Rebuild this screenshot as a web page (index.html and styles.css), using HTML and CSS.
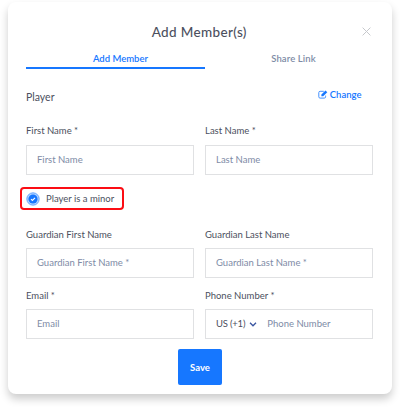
FILE: index.html
```html
<!DOCTYPE html>
<html lang="en">
<head>
<meta charset="utf-8">
<title>Add Member(s)</title>
<link rel="stylesheet" href="styles.css">
</head>
<body>
<main class="card">
  <header class="head">
    <h1 class="title">Add Member(s)</h1>
    <svg class="close" viewBox="0 0 9 9"><path d="M.6.6l7.8 7.8M8.4.6L.6 8.4"/></svg>
  </header>
  <nav class="tabs">
    <div class="tab active">Add Member</div>
    <div class="tab share">Share Link</div>
  </nav>
  <div class="section">
    <span class="player">Player</span>
    <span class="change">
      <svg class="edit" viewBox="0 0 10 9"><path class="line" d="M5.8 1.3H2.1Q.8 1.3.8 2.6v4.2q0 1.3 1.3 1.3h4.2q1.3 0 1.3-1.3V5.6"/><path class="fill" d="M3.4 4.5L7.5.4l1.8 1.8-4.1 4.1H3.4z"/></svg>
      <span>Change</span>
    </span>
  </div>
  <div class="row">
    <div class="field"><label>First Name *</label><div class="input">First Name</div></div>
    <div class="field"><label>Last Name *</label><div class="input">Last Name</div></div>
  </div>
  <div class="minor">
    <svg class="check" viewBox="0 0 14 14"><circle class="halo" cx="7" cy="7" r="6.2"/><circle class="disc" cx="7" cy="7" r="4.6"/><path d="M5 7.1l1.4 1.4L9 5.8"/></svg>
    <span>Player is a minor</span>
  </div>
  <div class="row guardian">
    <div class="field"><label>Guardian First Name</label><div class="input">Guardian First Name *</div></div>
    <div class="field"><label>Guardian Last Name</label><div class="input">Guardian Last Name *</div></div>
  </div>
  <div class="row contact">
    <div class="field"><label>Email *</label><div class="input">Email</div></div>
    <div class="field"><label>Phone Number *</label><div class="input"><span class="code">US (+1)</span><svg class="chev" viewBox="0 0 8 5"><path d="M1 .8l3 3 3-3"/></svg><span>Phone Number</span></div></div>
  </div>
  <button class="save">Save</button>
</main>
</body>
</html>
```
FILE: styles.css
```css
* { box-sizing: border-box; }
body {
  margin: 0;
  height: 409px;
  padding: 2px 8.5px 0 8px;
  background: #fff;
  overflow: hidden;
  font-family: Lato, "Noto Sans", sans-serif;
  font-size: 9.5px;
  line-height: 12px;
  color: #4c505e;
  white-space: nowrap;
}
.card {
  height: 392px;
  padding: 0 18px;
  border-radius: 8px;
  background: #fff;
  box-shadow: 0 5px 8px rgba(0, 0, 0, .2);
  display: flex;
  flex-direction: column;
}
.head {
  height: 50px;
  padding: 21px 3px 0 0;
  display: grid;
  grid-template-columns: 9px 1fr 9px;
}
.title {
  grid-column: 2;
  margin: 0;
  padding-left: 2px;
  text-align: center;
  font-size: 13.5px;
  line-height: 18px;
  font-weight: 500;
  letter-spacing: .35px;
}
.close { width: 9px; height: 9px; margin-top: 4px; }
.close path { stroke: #c6c8cc; stroke-width: 1; }
svg { display: block; fill: none; flex: none; }
.tabs { display: flex; height: 17px; width: 358px; }
.tab {
  width: 179px;
  padding: 1px 0 0 10px;
  text-align: center;
  border-bottom: 2px solid transparent;
  color: #7e8ba6;
  font-weight: 600;
}
.share { padding: 1px 2px 0 0; letter-spacing: .1px; }
.active { border-color: #1677ff; color: #1677ff; }
.section {
  display: flex;
  justify-content: space-between;
  padding: 18px 12px 0 0;
  height: 55px;
}
.player { font-size: 10.5px; padding-top: 4px; line-height: 13px; }
.change { display: flex; gap: 2px; color: #1677ff; font-weight: 600; padding-top: 2px; height: 14px; }
.edit { width: 10px; height: 9px; margin-top: 1px; }
.edit .line { stroke: #4391ff; stroke-width: 1; }
.edit .fill { fill: #1677ff; }
.row { display: flex; gap: 11px; height: 51px; }
.field { width: 168px; }
label { display: block; height: 20.5px; padding-top: 1px; }
.input {
  display: flex;
  align-items: center;
  height: 30px;
  border: 1px solid #e0e1e3;
  padding: 1px 10px 0;
  color: #7e8ba6;
}
.minor {
  width: 104px;
  height: 23px;
  margin: 12px 0 0 -6px;
  border: 2px solid #fb0d14;
  border-radius: 4px;
  display: flex;
  align-items: center;
  gap: 6px;
  padding-left: 4px;
}
.minor span { padding-top: 1px; }
.check { width: 14px; height: 14px; }
.halo { fill: #b4d5ff; stroke: #3b8cff; stroke-width: .7; }
.disc { fill: #1677ff; }
.check path { stroke: #fff; stroke-width: 1.1; }
.guardian { margin-top: 17px; }
.contact { margin-top: 10px; }
.guardian label, .contact label { padding-top: 2px; }
.code { color: #4c505e; letter-spacing: -.2px; }
.chev { width: 8px; height: 5px; margin: 0 10px 0 4px; }
.chev path { stroke: #3854a0; stroke-width: 1.3; }
.save {
  width: 44px;
  height: 36px;
  margin: 10px 0 0 152px;
  padding: 2px 0 0;
  border: 0;
  border-radius: 2px;
  background: #1677ff;
  color: #fff;
  font: 700 9.5px/12px Lato, "Noto Sans", sans-serif;
}
```
